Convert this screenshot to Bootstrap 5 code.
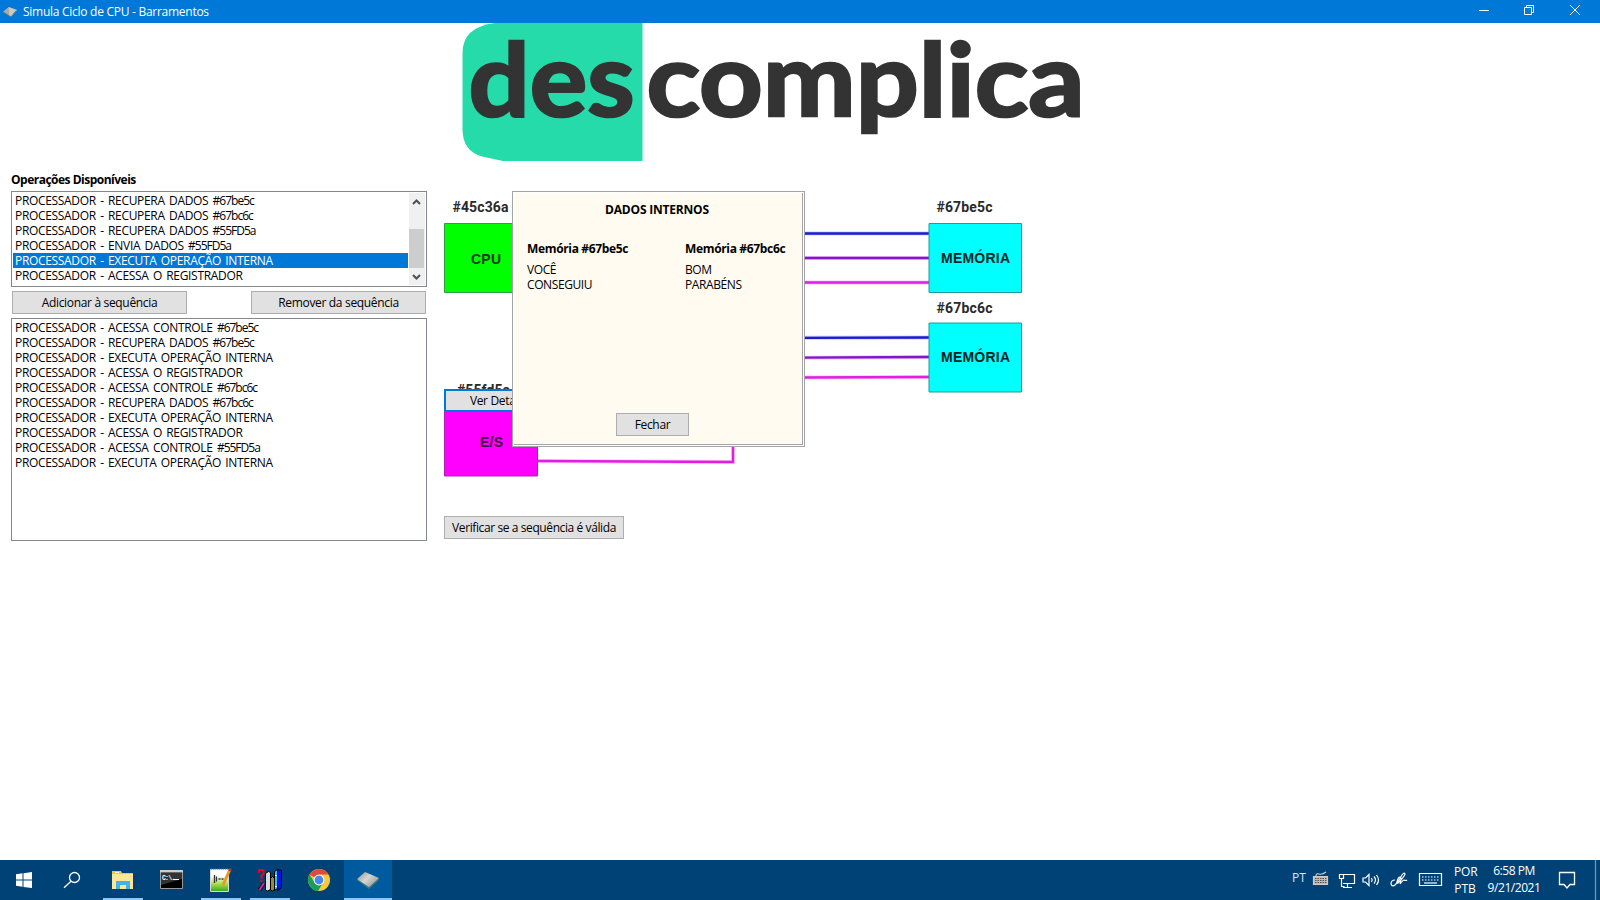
<!DOCTYPE html>
<html lang="pt-BR">
<head>
<meta charset="utf-8">
<title>Simula Ciclo de CPU - Barramentos</title>
<link rel="stylesheet" href="https://cdn.jsdelivr.net/npm/bootstrap@5.3.0/dist/css/bootstrap.min.css">
<style>
body{width:1600px;height:900px;overflow:hidden;background:#fff;color:#000;font:12px/15px "Open Sans",sans-serif;letter-spacing:-.2px}
.titlebar{height:23px;background:#0078d7;color:#fff;letter-spacing:-.27px;padding-left:3px}
.titlebar span{margin-left:6px}
.brand-row{height:138px;padding-left:462px}
.side{width:416px;margin-left:11px;padding-top:11px}
.cap{height:19px;font-weight:700;letter-spacing:-.5px}
.box{border:1px solid #828790;background:#fff;border-radius:0;padding:1px;letter-spacing:-.32px;word-spacing:1.5px}
.box i{font-style:normal;letter-spacing:-1px}
.box .list-group-item{height:15px;padding:0 2px;border:0;line-height:15px;color:#000;background:none;white-space:nowrap;border-radius:0}
.box .list-group-item.active{background:#0078d7;color:#fff;margin:0}
.ops{height:96px}.seq{height:223px}
.btnrow{padding:4px 1px}
.wbtn{height:23px;border:1px solid #adadad;background:#e1e1e1;border-radius:0;padding:0;font-size:12px;line-height:20px;color:#000;letter-spacing:-.33px;white-space:nowrap}
.btnrow .wbtn{width:175px}
.stage{width:620px;margin-left:17px;height:400px}
.details{left:0;top:228px;width:119px;border:2px solid #0078d7;line-height:18px}
.check{left:0;top:355px;width:180px;letter-spacing:-.4px}
.dlg{left:68px;top:30px;width:293px;height:256px;border:1px solid #a3a3a8;background:#fffbf0;letter-spacing:-.4px;box-shadow:inset 1px 1px #fff,inset -1px -1px #fff}
.dlg-in{border:solid #a3a3a8;border-width:0 1px 1px 0;margin:1px;padding:9px 0 8px 13px}
.dtitle{width:260px;text-align:center;letter-spacing:-.2px}
.dcols{margin-top:24px}
.dcol{width:158px}
.dhead{margin-bottom:6px;letter-spacing:-.34px}
.close-it{width:73px;margin-left:89px}
.taskbar{height:40px;background:#004275;color:#fff}
.app{width:40px;height:40px;margin-right:9px}
.app.on{border-bottom:2px solid #91c5f5;padding-top:2px}
.app.cur{width:48px;background:#005a9e;margin-right:0}
.clk{line-height:17px;letter-spacing:-.45px}
</style>
</head>
<body class="d-flex flex-column">
<header class="titlebar d-flex align-items-center">
<svg width="14" height="12" viewBox="0 0 14 12"><path d="M0 6 6 1 14 4 8 11Z" fill="#c8c8c4"/><path d="M0 6 6 1 6 9Z" fill="#a9aaa5"/><path d="M0 6 8 11 13 5" fill="none" stroke="#4d7970"/></svg>
<span class="flex-grow-1">Simula Ciclo de CPU - Barramentos</span>
<svg width="130" height="23" fill="none" stroke="#fff"><path d="M9 10.500H19M54.500 7.500h7v7h-7ZM56.500 7.500v-2h7v7h-2M100 5l10 10M110 5l-10 10"/></svg>
</header>
<div class="brand-row">
<svg width="640" height="138" overflow="visible" font-family="Lato" font-weight="700" font-size="102" letter-spacing="0" fill="#333"><path d="M33 0H180.500V138H41L20 133.500Q.5 128 .5 106V30Q.5 4 33 0Z" fill="#24dba9"/><g stroke="#333" stroke-width="2.600"><text x="6.500" y="93" textLength="166" lengthAdjust="spacingAndGlyphs">des</text><text x="184.500" y="93" textLength="438" lengthAdjust="spacingAndGlyphs">complica</text></g></svg>
</div>
<main class="d-flex flex-grow-1">
<section class="side">
<div class="cap">Operações Disponíveis</div>
<div class="box ops d-flex">
<div class="list-group flex-grow-1">
<div class="list-group-item">PROCESSADOR - RECUPERA DADOS <i>#67be5c</i></div>
<div class="list-group-item">PROCESSADOR - RECUPERA DADOS <i>#67bc6c</i></div>
<div class="list-group-item">PROCESSADOR - RECUPERA DADOS <i>#55FD5a</i></div>
<div class="list-group-item">PROCESSADOR - ENVIA DADOS <i>#55FD5a</i></div>
<div class="list-group-item active">PROCESSADOR - EXECUTA OPERAÇÃO INTERNA</div>
<div class="list-group-item">PROCESSADOR - ACESSA O REGISTRADOR</div>
</div>
<svg style="margin-left:1px" width="16" height="92"><path fill="#f0f0f0" d="M0 0h16v92H0z"/><path fill="#cdcdcd" d="M0 36h15v39H0z"/><path d="m4 11 3.500-3.500L11 11M4 82l3.500 3.500L11 82" fill="none" stroke="#505050" stroke-width="2"/></svg>
</div>
<div class="btnrow d-flex justify-content-between">
<button class="btn wbtn">Adicionar à sequência</button>
<button class="btn wbtn">Remover da sequência</button>
</div>
<div class="box seq list-group">
<div class="list-group-item">PROCESSADOR - ACESSA CONTROLE <i>#67be5c</i></div>
<div class="list-group-item">PROCESSADOR - RECUPERA DADOS <i>#67be5c</i></div>
<div class="list-group-item">PROCESSADOR - EXECUTA OPERAÇÃO INTERNA</div>
<div class="list-group-item">PROCESSADOR - ACESSA O REGISTRADOR</div>
<div class="list-group-item">PROCESSADOR - ACESSA CONTROLE <i>#67bc6c</i></div>
<div class="list-group-item">PROCESSADOR - RECUPERA DADOS <i>#67bc6c</i></div>
<div class="list-group-item">PROCESSADOR - EXECUTA OPERAÇÃO INTERNA</div>
<div class="list-group-item">PROCESSADOR - ACESSA O REGISTRADOR</div>
<div class="list-group-item">PROCESSADOR - ACESSA CONTROLE <i>#55FD5a</i></div>
<div class="list-group-item">PROCESSADOR - EXECUTA OPERAÇÃO INTERNA</div>
</div>
</section>
<section class="stage position-relative">
<svg width="620" height="400" viewBox="444 161 620 400" font-family="Roboto" font-weight="700" font-size="14" letter-spacing="0">
<g fill="none" stroke-width="4" opacity=".35"><g stroke="#6a6aff"><path d="M800 233.500H929M800 337.800 929 337.500"/></g><g stroke="#d060ff"><path d="M800 258H929M800 357.700 929 357"/></g><g stroke="#ff60ff"><path d="M800 282.500H929M800 377.500 929 377M538 461 733 462V440"/></g></g>
<g fill="none" stroke-width="2.300"><g stroke="#1c1ccf"><path d="M800 233.500H929M800 337.800 929 337.500"/></g><g stroke="#8416c4"><path d="M800 258H929M800 357.700 929 357"/></g><g stroke="#e01fe0"><path d="M800 282.500H929M800 377.500 929 377M538 461 733 462V440"/></g></g>
<path d="M444.500 223.500h93v69h-93z" fill="#0f0" stroke="#2f9e40"/><path d="M444.500 400.500h93v75.500h-93z" fill="#f0f" stroke="#b020b0"/>
<path d="M929 223.500h92.500v69H929zM929 323h92.500v69H929z" fill="#0ff" stroke="#289898"/>
<g fill="#2a2a2a"><text x="452.500" y="212" textLength="56">#45c36a</text><text x="457" y="394.500" textLength="53">#55fd5a</text><text x="936.500" y="212" textLength="56">#67be5c</text><text x="936.500" y="313" textLength="56">#67bc6c</text></g>
<g font-family="Liberation Sans"><text x="471" y="263.500" textLength="30" fill="#063b06">CPU</text><text x="480" y="447" textLength="23" fill="#3d063d">E/S</text><g fill="#062525"><text x="941" y="263" textLength="69">MEMÓRIA</text><text x="941" y="362" textLength="69">MEMÓRIA</text></g></g>
</svg>
<button class="btn wbtn details position-absolute">Ver Detalhes</button>
<button class="btn wbtn check position-absolute">Verificar se a sequência é válida</button>
<div class="dlg position-absolute d-flex">
<div class="dlg-in flex-grow-1 d-flex flex-column">
<div class="fw-bold dtitle">DADOS INTERNOS</div>
<div class="d-flex dcols">
<div class="dcol"><div class="fw-bold dhead">Memória #67be5c</div><div>VOCÊ</div><div>CONSEGUIU</div></div>
<div><div class="fw-bold dhead">Memória #67bc6c</div><div>BOM</div><div>PARABÉNS</div></div>
</div>
<button class="btn wbtn close-it mt-auto">Fechar</button>
</div>
</div>
</section>
</main>
<footer class="taskbar d-flex">
<div class="d-flex" style="padding-left:5px">
<div class="app"><svg width="40" height="40"><path fill="#fff" d="M11 14.300 17.500 13.300V19.500H11ZM18.500 13.200 27 12V19.500H18.500ZM11 20.500H17.500V26.800L11 25.800ZM18.500 20.500H27V28L18.500 26.900Z"/></svg></div>
<div class="app"><svg width="40" height="40" fill="none" stroke="#fff" stroke-width="1.300"><circle cx="20.500" cy="17.500" r="5"/><path d="M17 21.200 10 27.800"/></svg></div>
<div class="app on"><svg width="40" height="36"><path fill="#f7c530" d="M9 9h9l1 2h11v4H9z"/><path fill="#fff" d="M12 10h4v1h-4z"/><path fill="#fde698" d="M9 12h21v15H9z"/><path fill="#3fb4e8" d="M13 27v-8h14v8h-4v-4h-6v4z"/></svg></div>
<div class="app"><svg width="40" height="40"><path fill="#000" stroke="#999" d="M8.500 10.500h22v18h-22z"/><path fill="#ccc" d="M8 10h23v2.500H8z"/><path fill="#333" d="M9 13h21v6q-8 2-21 6z"/><text x="10" y="20" font-family="Liberation Mono" font-weight="700" font-size="6.500" fill="#fff" letter-spacing="-.8">C:\.</text><path stroke="#fff" d="M21 19.500h6"/></svg></div>
<div class="app on"><svg width="40" height="36"><defs><linearGradient id="g" x2="0" y2="1"><stop offset=".3" stop-color="#fff"/><stop offset=".65" stop-color="#a8e04c"/><stop offset="1" stop-color="#39a51c"/></linearGradient></defs><path fill="url(#g)" stroke="#d8d8d8" d="M9.500 7.500h18v22h-18z"/><path stroke="#777" stroke-dasharray="1 1" d="M10 7h18"/><path stroke="#333" stroke-width="1.300" fill="none" d="M13.500 13v8M15.500 14.500v5M17.500 17h2M20.500 17h2"/><path stroke="#e99a22" stroke-width="3" d="M28.500 8.500 22 23"/><path stroke="#b33a28" stroke-width="3" d="M29.500 6.500 28.500 9"/></svg></div>
<div class="app on"><svg width="40" height="36"><path fill="none" stroke="#f00020" stroke-width="2" d="M9 11V8H13.500V12L11.500 14V16.500M11.500 18v2"/><path stroke="#111" stroke-width="4" d="M9.500 28 14 21"/><path stroke="#c428a8" stroke-width="2" d="M9.500 28 14 21"/><path fill="#ddd" stroke="#000" d="m15.500 11.500 3-2 2 1v17l-3 1.500-2-1z"/><path fill="#8f8c45" stroke="#000" d="m20.500 16.500 2-2 2 2v11l-2 1.500-2-1z"/><path fill="#20c8e8" stroke="#000" d="m24.500 9.500 3-2v19l-3 2z"/><path fill="#0714e8" stroke="#000" d="m27.500 7.500 4 1v17l-4 3z"/><path stroke="#fff" d="M25 13.500h2M25 24.500h2"/></svg></div>
<div class="app" style="margin-right:5px"><svg width="40" height="40"><circle cx="20" cy="20" r="11" fill="#fbc93d"/><path fill="#dd4b3e" d="M20 20 10.500 14.500A11 11 0 0 1 29.500 14.500H20Z"/><path fill="#1b9e5a" d="M10.500 14.500A11 11 0 0 0 19 31L24 23 16 23Z"/><circle cx="20" cy="20" r="5.400" fill="#fff"/><circle cx="20" cy="20" r="4.400" fill="#4687f4"/></svg></div>
<div class="app on cur"><svg width="48" height="36"><defs><linearGradient id="s" y2=".7"><stop stop-color="#8d8d8d"/><stop offset=".5" stop-color="#d5d5d5"/><stop offset="1" stop-color="#999"/></linearGradient></defs><path fill="#3b8079" d="m13 18 12 9 10-9-1-2z"/><path fill="url(#s)" d="m13 17 8-7 14 6-10 9z"/></svg></div>
</div>
<div class="ms-auto d-flex">
<div style="width:20px;padding-top:10px;color:#dde6ee;letter-spacing:0">PT</div>
<svg width="142" height="40" viewBox="1312 0 142 40" fill="none" stroke="#fff" stroke-width="1.200">
<path fill="#bbb" stroke="#ccc" d="M1313.500 16.500h14v8h-14z"/><path stroke="#555" stroke-dasharray="1.500 1" d="M1315 18.500h12M1315 20.500h12M1315 22.500h12"/><path stroke="#ccc" d="M1316 16q0-3 3-2t7-2"/>
<path d="M1343 14.500h11.500v9H1343M1347.500 24v3M1343 27.500h9M1339.500 14.500h4v4h-4zM1341.500 18.500v8h3"/>
<path d="M1363 18h2.500l3.500-3.500v11l-3.500-3.500H1363zM1371.500 18q1.500 2 0 4M1374 16.500q3 3.500 0 7M1376.500 15q4 5 0 10"/>
<path d="M1395 20q-4 0-4 4 1 3 4 1 3-3 7-10 2-3 3-1 0 2-7 9-2 1-1-1 1-5 3-5 2 1 0 7 3-4 4-4 2 1 3 0"/>
<path d="M1419.500 13.500h22v12h-22z"/><path stroke-dasharray="1.500 1.500" d="M1422 17h18M1422 20h18"/><path d="M1424 23h13"/></svg>
<div class="clk text-center" style="width:22px;padding-top:3px;letter-spacing:-.1px">POR<br>PTB</div>
<div class="clk text-center" style="width:54px;margin-left:11px;padding-top:2px">6:58&nbsp;PM<br>9/21/2021</div>
<svg width="59" height="40" fill="none" stroke="#fff" stroke-width="1.300"><path d="M18.500 12.500h15v12H29L26 28l-3-3.500h-4.500z"/><path stroke="#7696b2" d="M54.500 0v40"/></svg>
</div>
</footer>
</body>
</html>
